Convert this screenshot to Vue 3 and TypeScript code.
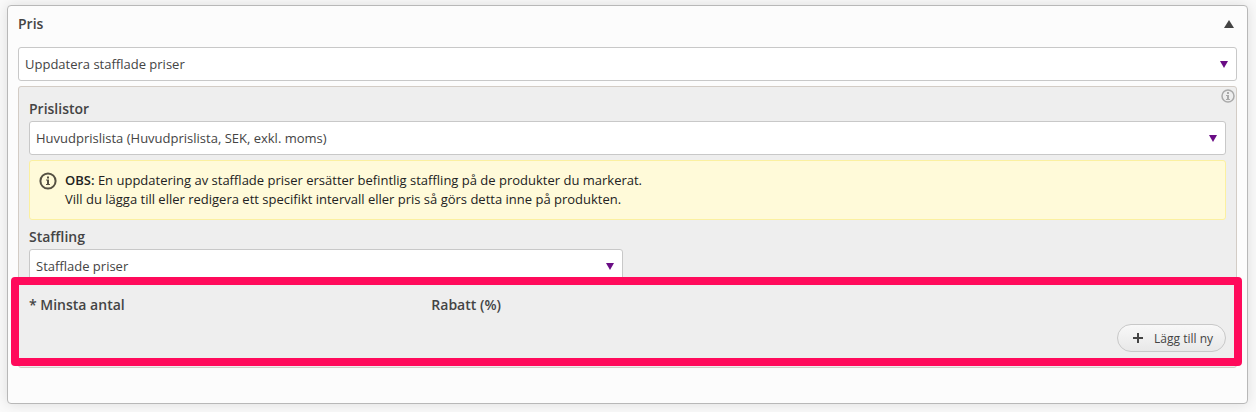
<script setup lang="ts">
import { ref } from 'vue'

const open = ref(true)
const action = ref('Uppdatera stafflade priser')
const priceList = ref('Huvudprislista (Huvudprislista, SEK, exkl. moms)')
const tierType = ref('Stafflade priser')
</script>

<template>
  <section class="card">
    <header class="card-header">
      <h2 class="title">Pris</h2>
      <button class="toggle" type="button" aria-label="Visa eller dölj" :aria-expanded="open" @click="open = !open">
        <svg width="10" height="8" viewBox="0 0 10 8"><path d="M5 0 10 8H0z" fill="#444" /></svg>
      </button>
    </header>

    <div v-if="open" class="card-body">
      <div class="select">
        <select v-model="action" aria-label="Åtgärd">
          <option>Uppdatera stafflade priser</option>
        </select>
        <svg class="arrow" width="8" height="7" viewBox="0 0 8 7"><path d="M0 0H8L4 7z" fill="#6a0d85" /></svg>
      </div>

      <div class="panel">
        <button class="help" type="button" aria-label="Hjälp">
          <svg width="14" height="14" viewBox="0 0 14 14">
            <circle cx="7" cy="7" r="6" fill="none" stroke="#aaa" stroke-width="1.5" />
            <path d="M6 3h2v2H6zM5 6h3v4h1v1H5v-1h1V7H5z" fill="#aaa" />
          </svg>
        </button>

        <label class="label" for="price-list">Prislistor</label>
        <div class="select">
          <select id="price-list" v-model="priceList">
            <option>Huvudprislista (Huvudprislista, SEK, exkl. moms)</option>
          </select>
          <svg class="arrow" width="8" height="7" viewBox="0 0 8 7"><path d="M0 0H8L4 7z" fill="#6a0d85" /></svg>
        </div>

        <div class="notice">
          <svg class="notice-icon" width="18" height="18" viewBox="0 0 18 18">
            <circle cx="9" cy="9" r="7.6" fill="none" stroke="#555043" stroke-width="2" />
            <path d="M8 4.5h2v2H8zM7 7.5h3v4.5h1v1H7v-1h1V8.5H7z" fill="#555043" />
          </svg>
          <p class="notice-text">
            <span class="strong">OBS:</span> En uppdatering av stafflade priser ersätter befintlig staffling på de produkter du markerat.<br />
            Vill du lägga till eller redigera ett specifikt intervall eller pris så görs detta inne på produkten.
          </p>
        </div>

        <label class="label" for="tier-type">Staffling</label>
        <div class="select half">
          <select id="tier-type" v-model="tierType">
            <option>Stafflade priser</option>
          </select>
          <svg class="arrow" width="8" height="7" viewBox="0 0 8 7"><path d="M0 0H8L4 7z" fill="#6a0d85" /></svg>
        </div>

        <div class="tiers">
          <div class="tier-heads">
            <span>* Minsta antal</span>
            <span>Rabatt (%)</span>
          </div>
          <button class="add" type="button">
            <svg width="10" height="10" viewBox="0 0 10 10"><path d="M4 0h2v4h4v2H6v4H4V6H0V4h4z" fill="#444" /></svg>
            Lägg till ny
          </button>
        </div>
      </div>
    </div>
  </section>
</template>

<style>
body {
  background: #fafafa;
}
</style>

<style scoped>
.card {
  margin: 5px 8px 8px 7px;
  padding: 0 10px 35px;
  border: 1px solid #b8b8b8;
  border-radius: 4px;
  background: #fcfcfc;
  box-shadow: 0 0 14px rgba(0, 0, 0, 0.12);
  color: #444;
  font-family: "Open Sans", sans-serif;
  font-size: 13px;
}
.card-header {
  display: flex;
  align-items: center;
  justify-content: space-between;
  height: 36px;
  margin-bottom: 5px;
}
.title {
  margin: 0;
  font-size: 14px;
  font-weight: 600;
  line-height: 20px;
}
.toggle,
.help {
  display: flex;
  padding: 0;
  border: 0;
  background: none;
}
.toggle {
  margin-right: 3px;
}
.select {
  display: flex;
  align-items: center;
  position: relative;
}
.select select {
  appearance: none;
  flex: 1;
  min-width: 0;
  height: 34px;
  padding: 0 24px 0 6px;
  border: 1px solid #c8c8c8;
  border-radius: 3px;
  background: #fff;
  color: #444;
  font: inherit;
}
.arrow {
  position: absolute;
  right: 9px;
  pointer-events: none;
}
.half {
  width: calc(50% - 5px);
}
.panel {
  position: relative;
  margin-top: 5px;
  padding: 11px 10px 9px;
  border: 1px solid #d3ccc5;
  border-radius: 3px;
  background: #eee;
}
.help {
  position: absolute;
  top: 2px;
  right: 1px;
}
.label {
  display: block;
  padding-bottom: 2px;
  font-size: 14px;
  font-weight: 600;
  line-height: 21px;
}
.notice {
  display: flex;
  gap: 8px;
  margin: 5px 0 6px;
  padding: 10px 9px;
  border: 1px solid #fbf0a0;
  border-radius: 3px;
  background: #fffad9;
  color: #222;
}
.notice-icon {
  flex: none;
  margin-top: 1px;
}
.notice-text {
  margin: 0;
  line-height: 19px;
}
.strong {
  font-weight: 600;
}
.tiers {
  display: flex;
  flex-direction: column;
  position: relative;
  margin-top: 2px;
}
.tiers::after {
  content: "";
  position: absolute;
  inset: -8px -16px -8px -18px;
  border: 8px solid #ff0a5b;
  border-radius: 4px;
  pointer-events: none;
}
.tier-heads {
  display: grid;
  grid-template-columns: 1fr 2fr;
  column-gap: 5px;
  line-height: 39px;
  font-size: 14px;
  font-weight: 600;
}
.add {
  display: flex;
  align-items: center;
  gap: 11px;
  align-self: flex-end;
  height: 28px;
  margin-bottom: 6px;
  padding: 0 12px 0 15px;
  border: 1px solid #c8c8c8;
  border-radius: 14px;
  background: linear-gradient(#f8f8f8, #e8e8e8);
  color: #444;
  font: inherit;
  font-size: 12px;
}
</style>
